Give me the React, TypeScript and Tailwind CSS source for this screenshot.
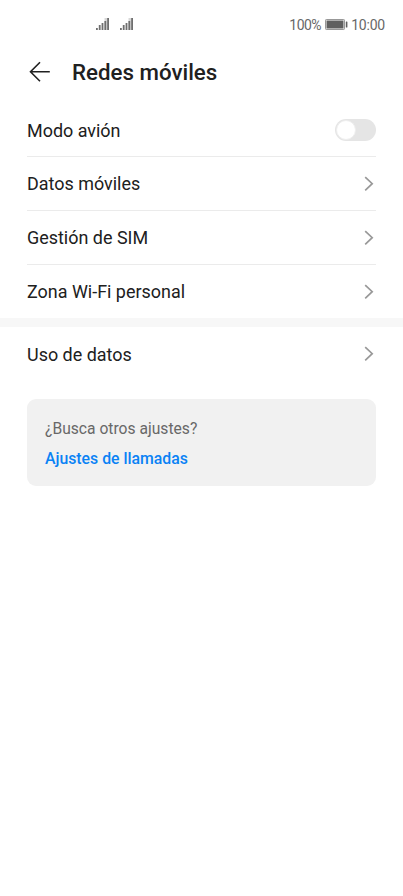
import type { ReactNode } from 'react';

const signalBars = [2, 5, 7, 9, 12];

function Signal() {
  return (
    <svg width="15" height="14" viewBox="0 0 15 14">
      <path d="M13 1H9.5V13H13Z" fill="#d8d8d8" />
      {signalBars.map((h, i) => (
        <rect key={h} x={1 + i * 2.8} y={13 - h} width="1.8" height={h} fill="#6f6f6f" />
      ))}
    </svg>
  );
}

function Battery() {
  return (
    <svg width="23" height="12" viewBox="0 0 23 12">
      <rect x="0.5" y="0.5" width="19" height="10" rx="0.8" fill="#e4e4e4" stroke="#989898" />
      <rect x="1.6" y="1.6" width="16.8" height="7.8" fill="#606060" />
      <rect x="20.8" y="2.5" width="1.6" height="6" rx="0.5" fill="#606060" />
    </svg>
  );
}

function Chevron() {
  return (
    <svg className="mr-[2px]" width="10" height="16" viewBox="0 0 10 16" fill="none" stroke="#999" strokeWidth="1.7">
      <path d="M1.2 1.1 8.2 7.7 1.2 14.3" />
    </svg>
  );
}

function Row({ label, labelClass = 'pt-px', line = true, children }: { label: string; labelClass?: string; line?: boolean; children: ReactNode }) {
  return (
    <div className={`mx-[27px] flex h-[54px] items-center justify-between border-b ${line ? 'border-[#ebebeb]' : 'border-transparent'}`}>
      <span className={`text-[17.95px] leading-6 ${labelClass}`}>{label}</span>
      {children}
    </div>
  );
}

export default function App() {
  return (
    <div className="min-h-screen w-full bg-white font-[Roboto,sans-serif] text-[#202020]">
      <div className="flex h-[48px] items-center justify-between pr-[18px] pl-[95px] text-[14px] tracking-[-0.2px] text-[#686868]">
        <div className="flex gap-[9px]">
          <Signal />
          <Signal />
        </div>
        <div className="flex items-center pt-[2px]">
          <span className="tracking-[-0.5px]">100%</span>
          <span className="mr-[3px] ml-[4px]"><Battery /></span>
          <span>10:00</span>
        </div>
      </div>
      <div className="flex h-[55px] items-center pb-[7px] pl-[29px]">
        <svg width="22" height="22" viewBox="0 0 22 22" fill="none" stroke="#202020" strokeWidth="1.6">
          <path d="M11 1.2 1.5 10.7 11 20.2M1.5 10.7H20.8" />
        </svg>
        <h1 className="ml-[21px] pt-px text-[22.3px] font-medium">Redes móviles</h1>
      </div>
      <Row label="Modo avión" labelClass="pt-[2px]">
        <div className="h-[22px] w-[41px] rounded-full bg-[#e5e5e5] p-px">
          <div className="h-5 w-5 rounded-full border border-[#eeeeee] bg-white" />
        </div>
      </Row>
      <Row label="Datos móviles"><Chevron /></Row>
      <Row label="Gestión de SIM"><Chevron /></Row>
      <Row label="Zona Wi-Fi personal" line={false}><Chevron /></Row>
      <div className="-mt-px h-[9px] bg-[#f7f7f7]" />
      <Row label="Uso de datos" labelClass="pt-[2px]" line={false}><Chevron /></Row>
      <div className="mx-[27px] mt-[18px] h-[87px] rounded-[9px] bg-[#f1f1f1] px-[18px] pt-[19px]">
        <p className="text-[15.65px] leading-[22px] text-[#686868]">¿Busca otros ajustes?</p>
        <p className="mt-[8px] text-[15.8px] leading-[22px] font-medium text-[#0a82f5]">Ajustes de llamadas</p>
      </div>
    </div>
  );
}
